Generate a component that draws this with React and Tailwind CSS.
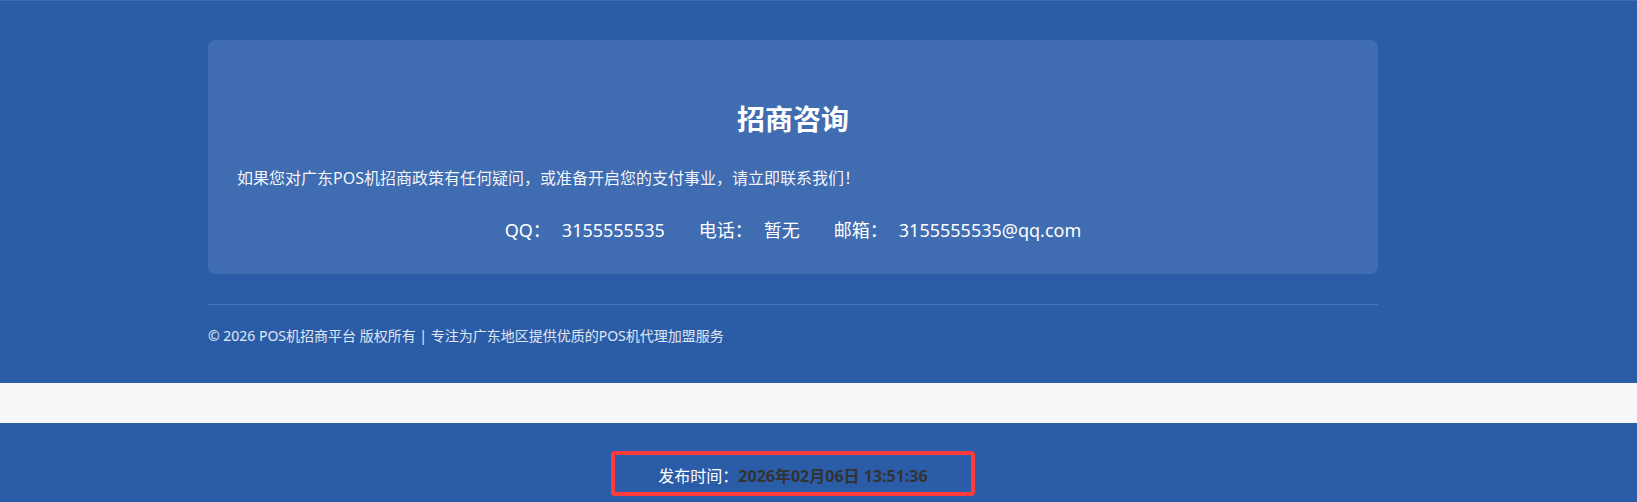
import React from 'react';

const contacts = [
  { label: 'QQ：', value: '3155555535' },
  { label: '电话：', value: '暂无' },
  { label: '邮箱：', value: '3155555535@qq.com' },
];

const App = () => {
  return (
    <div className="min-h-screen bg-[#2b5ca8] font-['Noto_Sans','Noto_Sans_CJK_SC',sans-serif]">
      <footer className="bg-[#2b5ca8] border-t border-white/10 pt-[39px] pb-[37px]">
        <div className="w-[1170px] ml-[208px]">
          <div className="rounded-lg bg-white/10 px-[29px] pt-[62px] pb-[30px] text-white">
            <h2 className="text-center text-[28px] font-bold leading-[34px] mb-[30px]">招商咨询</h2>
            <p className="text-[16px] leading-[24px] text-white/95">
              如果您对广东POS机招商政策有任何疑问，或准备开启您的支付事业，请立即联系我们！
            </p>
            <div className="mt-[27px] flex justify-center gap-[34px] text-[18px] leading-[27px]">
              {contacts.map((c) => (
                <span key={c.label}>
                  {c.label}
                  <span className="ml-[11px]">{c.value}</span>
                </span>
              ))}
            </div>
          </div>
          <div className="mt-[30px] border-t border-white/15 pt-[20px]">
            <p className="text-[14px] leading-[21px] text-white/85">
              © 2026 POS机招商平台 版权所有 | 专注为广东地区提供优质的POS机代理加盟服务
            </p>
          </div>
        </div>
      </footer>

      <div className="h-[40px] bg-[#f7f7f7]" />

      <section className="bg-[#2b5ca8] pt-[28px] pb-[10px]">
        <div className="w-[1586px] flex justify-center">
          <div className="rounded-[4px] border-4 border-[#fe3a3a] px-[43px] pt-[9px] pb-[4px] text-[16px] leading-[24px]">
            <span className="text-white">发布时间：</span>
            <span className="font-bold text-[#333333]">2026年02月06日 13:51:36</span>
          </div>
        </div>
      </section>
    </div>
  );
};

export default App;
